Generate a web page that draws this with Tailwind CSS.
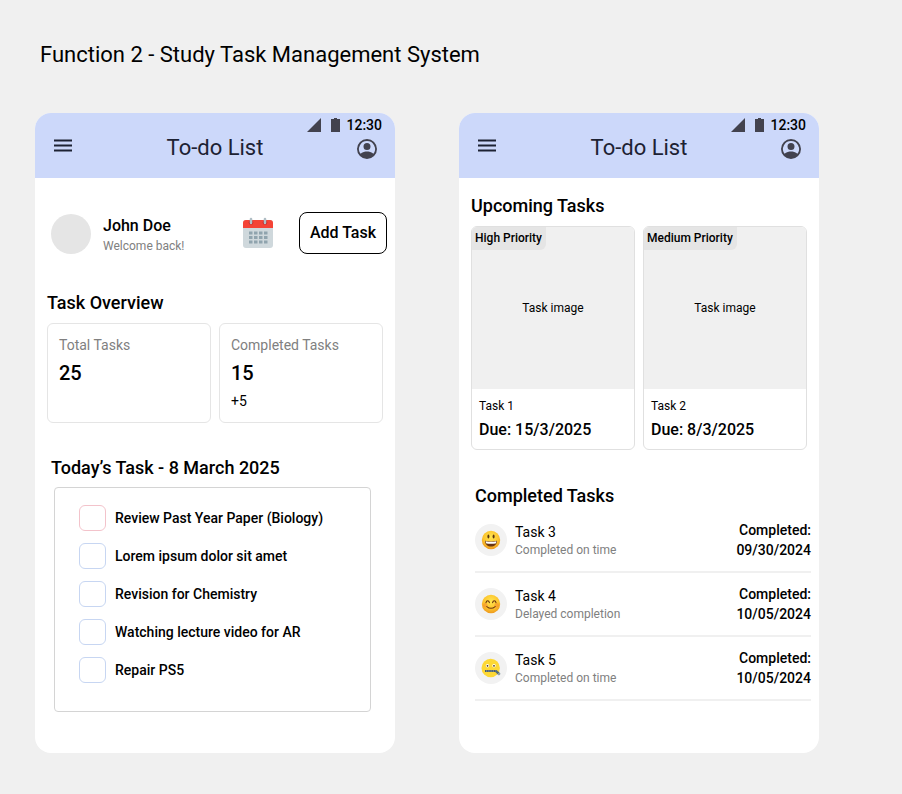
<!DOCTYPE html>
<html lang="en">
<head>
<meta charset="utf-8">
<meta name="viewport" content="width=device-width, initial-scale=1">
<title>Study Task Management System</title>
<script src="https://cdn.jsdelivr.net/npm/@tailwindcss/browser@4"></script>
</head>
<body class="min-h-screen bg-[#f0f0f0] font-['Roboto',sans-serif] text-black">
<svg class="absolute size-0" aria-hidden="true">
  <defs>
    <radialGradient id="face" cx="50%" cy="35%" r="65%">
      <stop offset="0" stop-color="#ffe650"/><stop offset=".6" stop-color="#fdc62f"/><stop offset="1" stop-color="#ee9a1e"/>
    </radialGradient>
    <symbol id="menu" viewBox="0 0 24 24"><path fill="#1d2233" d="M3 2.500h18v2H3zM3 7.500h18v2H3zM3 12.500h18v2H3z"/></symbol>
    <symbol id="account" viewBox="0 0 24 24"><path fill="#42424e" d="M12 2a10 10 0 1 0 0 20 10 10 0 0 0 0-20zm0 2a8 8 0 0 1 6.400 12.800C17 15.200 13.600 14.600 12 14.600s-5 .6-6.400 2.200A8 8 0 0 1 12 4zm0 2a3.500 3.500 0 1 0 0 7 3.500 3.500 0 0 0 0-7z"/></symbol>
    <symbol id="signal" viewBox="0 0 14 14"><path fill="#42424e" d="M14 0v14H0z"/></symbol>
    <symbol id="battery" viewBox="0 0 9 14"><path fill="#42424e" d="M3 0h3v1h3v13H0V1h3z"/></symbol>
  </defs>
</svg>

<h1 class="pt-[41px] pl-10 pr-4 text-[22px] leading-7">Function 2 - Study Task Management System</h1>

<div class="mt-11 grid grid-cols-1 gap-16 pb-10 pl-[35px] pr-[83px] md:grid-cols-2">

  <main class="overflow-hidden rounded-2xl bg-white pb-[41px]">
    <header class="bg-[#ccd8fa] pb-[17px]">
      <div class="flex h-6 items-center justify-end pr-[13px] text-sm font-medium">
        <svg class="size-3.5"><use href="#signal"/></svg>
        <svg class="ml-2.5 h-3.5 w-[9px]"><use href="#battery"/></svg>
        <span class="ml-1.5">12:30</span>
      </div>
      <div class="grid h-6 grid-cols-[24px_1fr_24px] px-4">
        <button type="button" aria-label="Menu"><svg class="size-6"><use href="#menu"/></svg></button>
        <h2 class="text-center text-[22px] leading-[22px] text-[#1d2233]">To-do List</h2>
        <button type="button" aria-label="Account"><svg class="size-6"><use href="#account"/></svg></button>
      </div>
    </header>

    <section class="flex items-end pt-[34px] pl-4 pr-2">
      <div class="size-10 rounded-full bg-[#e5e5e5]"></div>
      <div class="ml-3 flex-1">
        <p class="text-base leading-6 font-medium">John Doe</p>
        <p class="text-xs leading-4 text-[#808080]">Welcome back!</p>
      </div>
      <svg class="h-8 w-[30px] self-center" viewBox="0 0 30 32" aria-label="Calendar" role="img">
        <rect y="3" width="30" height="28" rx="3" fill="#cfd8dc"/>
        <path d="M3 3h24a3 3 0 0 1 3 3v5H0V6a3 3 0 0 1 3-3z" fill="#f44336"/>
        <circle cx="8" cy="5.500" r="2.300" fill="#c62828"/><circle cx="22" cy="5.500" r="2.300" fill="#c62828"/>
        <path d="M8 2v4M22 2v4" stroke="#b0bec5" stroke-width="2.600" stroke-linecap="round"/>
        <path d="M6 16h18.500M6 20.500h18.500M6 25h18.500" stroke="#90a4ae" stroke-width="3" stroke-dasharray="3.500 1.500"/>
      </svg>
      <button type="button" class="ml-[26px] h-[42px] w-[88px] rounded-lg border border-black bg-white text-base font-medium">Add Task</button>
    </section>

    <section class="mt-[37px] px-3">
      <h3 class="text-lg leading-6 font-medium">Task Overview</h3>
      <div class="mt-2 grid grid-cols-2 gap-2">
        <div class="rounded-md border border-[#e5e5e5] p-[11px]">
          <p class="text-sm text-[#808080]">Total Tasks</p>
          <p class="mt-1 text-xl font-medium">25</p>
        </div>
        <div class="rounded-md border border-[#e5e5e5] p-[11px]">
          <p class="text-sm text-[#808080]">Completed Tasks</p>
          <p class="mt-1 text-xl font-medium">15</p>
          <p class="mt-1 text-sm">+5</p>
        </div>
      </div>
    </section>

    <section class="mt-[33px] pl-4 pr-6">
      <h3 class="text-lg leading-6 font-medium">Today’s Task - 8 March 2025</h3>
      <div class="mt-[7px] ml-[3px] flex flex-col gap-3 rounded-sm border border-[#d4d4d4] pt-[17px] pb-7 pl-6 text-sm font-medium">
        <label class="flex items-center gap-[9px]"><input type="checkbox" class="h-[26px] w-[27px] shrink-0 appearance-none rounded-md border border-[#f3c3cb] bg-white checked:bg-[#f3c3cb]">Review Past Year Paper (Biology)</label>
        <label class="flex items-center gap-[9px]"><input type="checkbox" class="h-[26px] w-[27px] shrink-0 appearance-none rounded-md border border-[#c7d6f2] bg-white checked:bg-[#c7d6f2]">Lorem ipsum dolor sit amet</label>
        <label class="flex items-center gap-[9px]"><input type="checkbox" class="h-[26px] w-[27px] shrink-0 appearance-none rounded-md border border-[#c7d6f2] bg-white checked:bg-[#c7d6f2]">Revision for Chemistry</label>
        <label class="flex items-center gap-[9px]"><input type="checkbox" class="h-[26px] w-[27px] shrink-0 appearance-none rounded-md border border-[#c7d6f2] bg-white checked:bg-[#c7d6f2]">Watching lecture video for AR</label>
        <label class="flex items-center gap-[9px]"><input type="checkbox" class="h-[26px] w-[27px] shrink-0 appearance-none rounded-md border border-[#c7d6f2] bg-white checked:bg-[#c7d6f2]">Repair PS5</label>
      </div>
    </section>
  </main>

  <main class="overflow-hidden rounded-2xl bg-white pb-[41px]">
    <header class="bg-[#ccd8fa] pb-[17px]">
      <div class="flex h-6 items-center justify-end pr-[13px] text-sm font-medium">
        <svg class="size-3.5"><use href="#signal"/></svg>
        <svg class="ml-2.5 h-3.5 w-[9px]"><use href="#battery"/></svg>
        <span class="ml-1.5">12:30</span>
      </div>
      <div class="grid h-6 grid-cols-[24px_1fr_24px] px-4">
        <button type="button" aria-label="Menu"><svg class="size-6"><use href="#menu"/></svg></button>
        <h2 class="text-center text-[22px] leading-[22px] text-[#1d2233]">To-do List</h2>
        <button type="button" aria-label="Account"><svg class="size-6"><use href="#account"/></svg></button>
      </div>
    </header>

    <section class="px-3 pt-4">
      <h3 class="text-lg leading-6 font-medium">Upcoming Tasks</h3>
      <div class="mt-2 grid grid-cols-2 gap-2">
        <article class="overflow-hidden rounded-md border border-[#e0e0e0]">
          <div class="relative flex aspect-square items-center justify-center bg-[#f0f0f0] text-xs">
            <span class="absolute top-0 left-0 rounded-br-md bg-[#e5e5e5] pt-[3px] pr-1 pb-1 pl-[3px] font-medium">High Priority</span>
            Task image
          </div>
          <div class="px-[7px] pt-[9px] pb-[7px]">
            <p class="text-xs leading-4">Task 1</p>
            <p class="mt-1 text-base leading-6 font-medium">Due: 15/3/2025</p>
          </div>
        </article>
        <article class="overflow-hidden rounded-md border border-[#e0e0e0]">
          <div class="relative flex aspect-square items-center justify-center bg-[#f0f0f0] text-xs">
            <span class="absolute top-0 left-0 rounded-br-md bg-[#e5e5e5] pt-[3px] pr-1 pb-1 pl-[3px] font-medium">Medium Priority</span>
            Task image
          </div>
          <div class="px-[7px] pt-[9px] pb-[7px]">
            <p class="text-xs leading-4">Task 2</p>
            <p class="mt-1 text-base leading-6 font-medium">Due: 8/3/2025</p>
          </div>
        </article>
      </div>
    </section>

    <section class="mt-[34px] pl-4 pr-2">
      <h3 class="text-lg leading-6 font-medium">Completed Tasks</h3>
      <ul class="pt-px">
        <li class="flex items-center border-b-2 border-[#f0f0f0] py-[11px]">
          <span class="flex size-8 items-center justify-center rounded-full bg-[#f2f2f2]">
            <svg class="size-5" viewBox="0 0 20 20" aria-label="Smiling face" role="img">
              <circle cx="10" cy="10" r="9.200" fill="url(#face)"/>
              <ellipse cx="7.400" cy="6.600" rx="1" ry="2" fill="#5a3510"/><ellipse cx="12.600" cy="6.600" rx="1" ry="2" fill="#5a3510"/>
              <path d="M4 10.800q6 1.200 12 0c0 3.600-2.700 5.800-6 5.800s-6-2.200-6-5.800z" fill="#6b3510"/>
              <path d="M4.600 11.300q5.400 1 10.800 0-.2 1.700-.8 2.200-4.600.7-9.200 0-.6-.6-.8-2.200z" fill="#fff"/>
            </svg>
          </span>
          <div class="ml-2 flex-1">
            <p class="text-sm">Task 3</p>
            <p class="text-xs leading-4 text-[#808080]">Completed on time</p>
          </div>
          <p class="text-right text-sm font-medium">Completed:<br>09/30/2024</p>
        </li>
        <li class="flex items-center border-b-2 border-[#f0f0f0] py-[11px]">
          <span class="flex size-8 items-center justify-center rounded-full bg-[#f2f2f2]">
            <svg class="size-5" viewBox="0 0 20 20" aria-label="Smiling face with blushing cheeks" role="img">
              <circle cx="10" cy="10" r="9.200" fill="url(#face)"/>
              <circle cx="4.300" cy="11.200" r="2.300" fill="#f5862e" opacity=".5"/><circle cx="15.700" cy="11.200" r="2.300" fill="#f5862e" opacity=".5"/>
              <path d="M5 8.700q.4-2 1.700-2t1.700 2M11.600 8.700q.4-2 1.700-2t1.700 2M5.800 12.600q4.200 3.400 8.400 0" fill="none" stroke="#6b3510" stroke-width="1.100" stroke-linecap="round"/>
            </svg>
          </span>
          <div class="ml-2 flex-1">
            <p class="text-sm">Task 4</p>
            <p class="text-xs leading-4 text-[#808080]">Delayed completion</p>
          </div>
          <p class="text-right text-sm font-medium">Completed:<br>10/05/2024</p>
        </li>
        <li class="flex items-center border-b-2 border-[#f0f0f0] py-[11px]">
          <span class="flex size-8 items-center justify-center rounded-full bg-[#f2f2f2]">
            <svg class="size-5" viewBox="0 0 20 20" aria-label="Zipper-mouth face" role="img">
              <circle cx="9.700" cy="10" r="9.200" fill="#fdd835"/>
              <circle cx="6.500" cy="7.800" r="1.700" fill="#fff"/><circle cx="13" cy="7.800" r="1.700" fill="#fff"/>
              <circle cx="6.500" cy="7.800" r=".9" fill="#4a3210"/><circle cx="13" cy="7.800" r=".9" fill="#4a3210"/>
              <path d="M4 13h11.500" stroke="#78909c" stroke-width="2.200"/>
              <path d="M4 13h11.500" stroke="#3f4a50" stroke-width="1.600" stroke-dasharray="1 .8"/>
              <path d="M15.300 13.400l2.800 2.600" stroke="#546e7a" stroke-width="2.400" stroke-linecap="round"/><circle cx="18" cy="16" r=".7" fill="#eceff1"/>
            </svg>
          </span>
          <div class="ml-2 flex-1">
            <p class="text-sm">Task 5</p>
            <p class="text-xs leading-4 text-[#808080]">Completed on time</p>
          </div>
          <p class="text-right text-sm font-medium">Completed:<br>10/05/2024</p>
        </li>
      </ul>
    </section>
  </main>
</div>
</body>
</html>
